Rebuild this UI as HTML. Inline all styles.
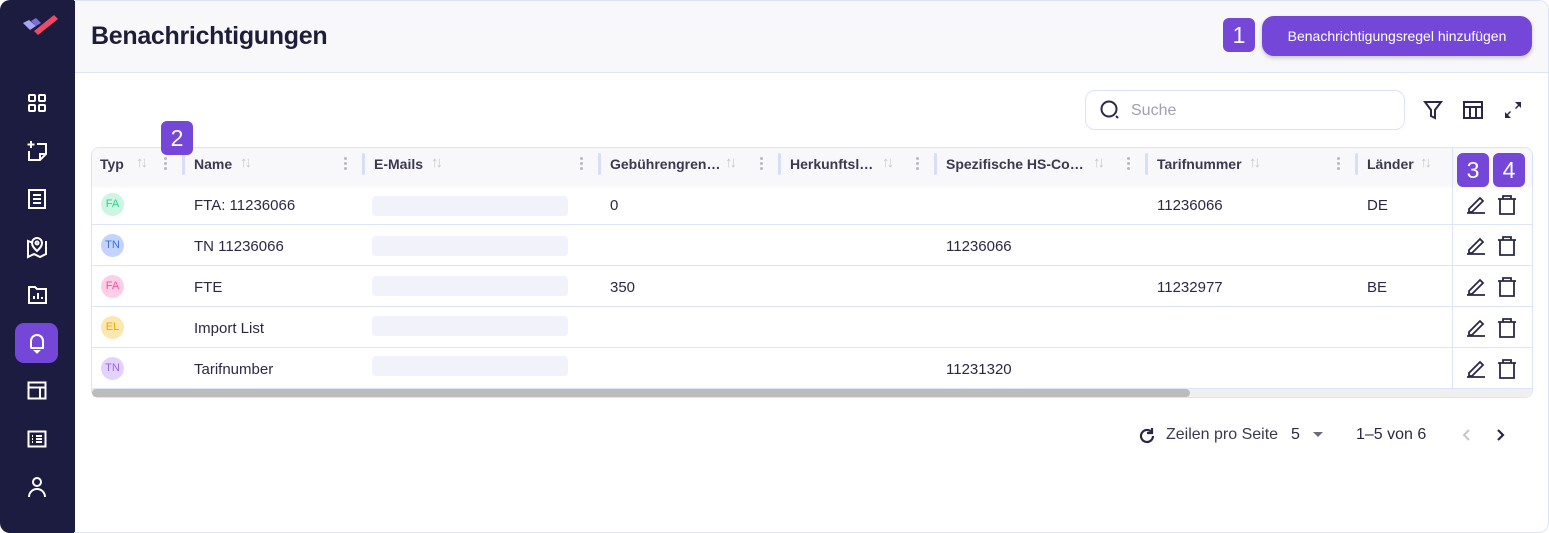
<!DOCTYPE html>
<html><head><meta charset="utf-8"><style>
*{box-sizing:border-box;margin:0;padding:0}
body{width:1549px;height:533px;background:#fff;font-family:"Liberation Sans",sans-serif;color:#2a2945;position:relative;overflow:hidden}
.a{position:absolute}
.side{left:0;top:0;width:75px;height:533px;background:#1c1b40;border-radius:10px 0 0 10px}
.main{left:74px;top:0;width:1475px;height:533px;border:1px solid #dde3f8;border-left:none;border-radius:0 10px 10px 0}
.hdr{left:75px;top:1px;width:1473px;height:72px;background:#f8f8fa;border-bottom:1px solid #dde3f8;border-radius:0 10px 0 0}
.badge{background:#7447d9;color:#fff;border-radius:6px;font-size:23px;text-align:center;line-height:34px;width:32px;height:34px}
.th{font-size:14px;font-weight:bold;color:#3a3950;top:156px}
.sort{top:154px;color:#c5c5d0;font-size:15px;letter-spacing:-3px}
.dots{top:157px;width:4px}
.dots i{display:block;width:3px;height:3px;border-radius:50%;background:#b8b8c4;margin-bottom:2px}
.div{top:153px;width:3px;height:22px;background:#d7defa;border-radius:2px}
.td{font-size:15px;color:#2a2945}
.av{width:23px;height:23px;border-radius:50%;font-size:11px;text-align:center;line-height:23px;left:101px}
.ph{left:372px;width:196px;height:20px;background:#f1f2fa;border-radius:4px}
.line{left:92px;width:1440px;height:1px;background:#dde3f8}
svg.i{position:absolute}
</style></head><body>
<div class="a side"></div>
<div class="a main"></div>
<div class="a hdr"></div>
<!-- logo -->
<svg class="i" style="left:22px;top:14px" width="36" height="22" viewBox="0 0 36 22"><path d="M1 9l6-3 7 6-6 4z" fill="#a9a6f0"/><path d="M9 7l5-3 5 5-5 3z" fill="#7a6fe0"/><path d="M12 17l20-16 4 4-20 16z" fill="#ef4a64"/></svg>
<!-- sidebar icons -->
<svg class="i" style="left:27px;top:93px" width="20" height="20" viewBox="0 0 20 20" fill="none" stroke="#fff" stroke-width="2"><rect x="2" y="2" width="6" height="6" rx="1"/><rect x="12" y="2" width="6" height="6" rx="1"/><rect x="2" y="12" width="6" height="6" rx="1"/><rect x="12" y="12" width="6" height="6" rx="1"/></svg>
<svg class="i" style="left:26px;top:140px" width="22" height="22" viewBox="0 0 22 22" fill="none" stroke="#fff" stroke-width="2"><path d="M5 1v7M1.5 4.5h7"/><path d="M11 4h9v10l-6 6H3v-9"/><path d="M14 20v-6h6"/></svg>
<svg class="i" style="left:27px;top:188px" width="20" height="22" viewBox="0 0 20 22" fill="none" stroke="#fff" stroke-width="2"><rect x="2" y="2" width="16" height="18"/><path d="M6 7h8M6 11h8M6 15h8"/></svg>
<svg class="i" style="left:26px;top:235px" width="22" height="24" viewBox="0 0 22 24" fill="none" stroke="#fff" stroke-width="2"><path d="M7 8L2 6v16l6-3 6 3 6-3V6"/><path d="M11 16c-3-3-5-5-5-8a5 5 0 0110 0c0 3-2 5-5 8z"/><circle cx="11" cy="8" r="1.5"/></svg>
<svg class="i" style="left:27px;top:285px" width="21" height="20" viewBox="0 0 21 20" fill="none" stroke="#fff" stroke-width="2"><path d="M2 2h6l2 2h9v14H2z"/><path d="M7 14v-3M11 14v-6M15 14v-2"/></svg>
<div class="a" style="left:15px;top:323px;width:43px;height:40px;background:#7447d9;border-radius:9px"></div>
<svg class="i" style="left:27px;top:332px" width="20" height="22" viewBox="0 0 20 22" fill="none" stroke="#fff" stroke-width="2"><path d="M4 16V9a6 6 0 0112 0v7H3.5"/><path d="M8.5 19h3l-1.5 1.5z" fill="#fff"/></svg>
<svg class="i" style="left:27px;top:381px" width="20" height="19" viewBox="0 0 20 19" fill="none" stroke="#fff" stroke-width="2"><rect x="1.5" y="1.5" width="17" height="16"/><path d="M1.5 6.5h17M13 6.5v11"/></svg>
<svg class="i" style="left:27px;top:430px" width="20" height="18" viewBox="0 0 20 18" fill="none" stroke="#fff" stroke-width="2"><rect x="1.5" y="1.5" width="17" height="15"/><path d="M5 6h1M9 6h6M5 9h1M9 9h6M5 12h1M9 12h6"/></svg>
<svg class="i" style="left:28px;top:476px" width="18" height="22" viewBox="0 0 18 22" fill="none" stroke="#fff" stroke-width="2"><circle cx="9" cy="6" r="4"/><path d="M1 21a8 8 0 0116 0"/></svg>

<div class="a" style="left:91px;top:22px;font-size:25px;font-weight:bold;color:#1f1e3a;letter-spacing:-0.3px">Benachrichtigungen</div>
<div class="a badge" style="left:1223px;top:18px">1</div>
<div class="a" style="left:1262px;top:16px;width:270px;height:40px;background:#7447d9;border-radius:12px;color:#fff;font-size:14px;text-align:center;line-height:40px;box-shadow:0 2px 4px rgba(0,0,0,.2)">Benachrichtigungsregel hinzufügen</div>

<!-- search -->
<div class="a" style="left:1085px;top:90px;width:320px;height:40px;border:1px solid #dde3f8;border-radius:10px"></div>
<svg class="i" style="left:1100px;top:100px" width="22" height="22" viewBox="0 0 22 22" fill="none" stroke="#2a2945" stroke-width="2"><circle cx="9" cy="9" r="7.5"/><path d="M16 16l2 2"/></svg>
<div class="a" style="left:1131px;top:102px;font-size:16px;color:#a0a0b0">Suche</div>
<svg class="i" style="left:1423px;top:100px" width="20" height="20" viewBox="0 0 20 20" fill="none" stroke="#2a2945" stroke-width="2"><path d="M2 2h16l-6 8v8l-4-2v-6z"/></svg>
<svg class="i" style="left:1462px;top:100px" width="22" height="20" viewBox="0 0 22 20" fill="none" stroke="#2a2945" stroke-width="2"><rect x="2" y="2" width="18" height="16"/><path d="M2 7h18M8 7v11M14 7v11"/></svg>
<svg class="i" style="left:1503px;top:100px" width="20" height="20" viewBox="0 0 20 20" fill="#2a2945"><path d="M12 2h6v6l-2-2-3 3-1-1 3-3z"/><path d="M8 18H2v-6l2 2 3-3 1 1-3 3z"/></svg>

<!-- table -->
<div class="a" style="left:91px;top:147px;width:1442px;height:251px;border:1px solid #dde3f8;border-radius:8px"></div>
<div class="a" style="left:92px;top:148px;width:1440px;height:37px;background:#f8f8fa;border-radius:8px 8px 0 0;box-shadow:0 2px 3px rgba(0,0,0,.04)"></div>
<div class="a th" style="left:100px">Typ</div><div class="a sort" style="left:136px">↑↓</div>
<div class="a dots" style="left:164px"><i></i><i></i><i></i></div><div class="a div" style="left:182px"></div>
<div class="a th" style="left:194px">Name</div><div class="a sort" style="left:240px">↑↓</div>
<div class="a dots" style="left:344px"><i></i><i></i><i></i></div><div class="a div" style="left:362px"></div>
<div class="a th" style="left:374px">E-Mails</div><div class="a sort" style="left:431px">↑↓</div>
<div class="a dots" style="left:580px"><i></i><i></i><i></i></div><div class="a div" style="left:598px"></div>
<div class="a th" style="left:610px">Gebührengren…</div><div class="a sort" style="left:725px">↑↓</div>
<div class="a dots" style="left:760px"><i></i><i></i><i></i></div><div class="a div" style="left:778px"></div>
<div class="a th" style="left:790px">Herkunftsl…</div><div class="a sort" style="left:882px">↑↓</div>
<div class="a dots" style="left:916px"><i></i><i></i><i></i></div><div class="a div" style="left:934px"></div>
<div class="a th" style="left:946px">Spezifische HS-Co…</div><div class="a sort" style="left:1093px">↑↓</div>
<div class="a dots" style="left:1127px"><i></i><i></i><i></i></div><div class="a div" style="left:1145px"></div>
<div class="a th" style="left:1157px">Tarifnummer</div><div class="a sort" style="left:1249px">↑↓</div>
<div class="a dots" style="left:1337px"><i></i><i></i><i></i></div><div class="a div" style="left:1355px"></div>
<div class="a th" style="left:1367px">Länder</div><div class="a sort" style="left:1420px">↑↓</div>
<div class="a" style="left:1452px;top:148px;width:1px;height:241px;background:#dde3f8"></div>

<div class="a line" style="top:224px"></div>
<div class="a line" style="top:265px"></div>
<div class="a line" style="top:306px"></div>
<div class="a line" style="top:347px"></div>
<div class="a line" style="top:388px"></div>

<div class="a av" style="top:193px;background:#cdf5e3;color:#3ccf8e">FA</div>
<div class="a td" style="left:194px;top:197px">FTA: 11236066</div><div class="a ph" style="top:196px"></div>
<div class="a td" style="left:610px;top:197px">0</div><div class="a td" style="left:1157px;top:197px">11236066</div><div class="a td" style="left:1367px;top:197px">DE</div>

<div class="a av" style="top:234px;background:#c3d3fb;color:#3d6ff0">TN</div>
<div class="a td" style="left:194px;top:238px">TN 11236066</div><div class="a ph" style="top:236px"></div>
<div class="a td" style="left:946px;top:238px">11236066</div>

<div class="a av" style="top:275px;background:#fdcfe6;color:#f0549e">FA</div>
<div class="a td" style="left:194px;top:279px">FTE</div><div class="a ph" style="top:276px"></div>
<div class="a td" style="left:610px;top:279px">350</div><div class="a td" style="left:1157px;top:279px">11232977</div><div class="a td" style="left:1367px;top:279px">BE</div>

<div class="a av" style="top:316px;background:#fde7b0;color:#f0a800">EL</div>
<div class="a td" style="left:194px;top:320px">Import List</div><div class="a ph" style="top:316px"></div>

<div class="a av" style="top:357px;background:#e2d3fd;color:#9a64ee">TN</div>
<div class="a td" style="left:194px;top:361px">Tarifnumber</div><div class="a ph" style="top:356px"></div>
<div class="a td" style="left:946px;top:361px">11231320</div>

<!-- action icons -->
<svg class="i" style="left:1464px;top:194px" width="58" height="190" viewBox="0 0 58 190" fill="none" stroke="#2a2945" stroke-width="1.8">
<g><path d="M3 19h18M5 15l11-11 3 3-11 11H5z"/><path d="M34 5h18M39 5V2h8v3M36 5v15h14V5"/></g>
<g transform="translate(0,41)"><path d="M3 19h18M5 15l11-11 3 3-11 11H5z"/><path d="M34 5h18M39 5V2h8v3M36 5v15h14V5"/></g>
<g transform="translate(0,82)"><path d="M3 19h18M5 15l11-11 3 3-11 11H5z"/><path d="M34 5h18M39 5V2h8v3M36 5v15h14V5"/></g>
<g transform="translate(0,123)"><path d="M3 19h18M5 15l11-11 3 3-11 11H5z"/><path d="M34 5h18M39 5V2h8v3M36 5v15h14V5"/></g>
<g transform="translate(0,164)"><path d="M3 19h18M5 15l11-11 3 3-11 11H5z"/><path d="M34 5h18M39 5V2h8v3M36 5v15h14V5"/></g>
</svg>

<!-- scrollbar -->
<div class="a" style="left:92px;top:389px;width:1440px;height:8px;background:#efefef;border-radius:0 0 8px 8px"></div>
<div class="a" style="left:92px;top:389px;width:1098px;height:8px;background:#bcbcbc;border-radius:4px"></div>

<div class="a badge" style="left:161px;top:121px">2</div>
<div class="a badge" style="left:1457px;top:153px">3</div>
<div class="a badge" style="left:1493px;top:153px">4</div>

<!-- pagination -->
<svg class="i" style="left:1137px;top:426px" width="20" height="20" viewBox="0 0 20 20" fill="none" stroke="#2a2945" stroke-width="2.2"><path d="M16 10a6 6 0 11-2-4.5"/><path d="M15 2v5h-5" fill="none"/></svg>
<div class="a" style="left:1166px;top:426px;font-size:16px;color:#3a3950">Zeilen pro Seite</div>
<div class="a" style="left:1291px;top:426px;font-size:16px;color:#2a2945">5</div>
<div class="a" style="left:1313px;top:432px;width:0;height:0;border-left:5px solid transparent;border-right:5px solid transparent;border-top:5px solid #6a6a7a"></div>
<div class="a" style="left:1356px;top:426px;font-size:16px;color:#2a2945">1–5 von 6</div>
<svg class="i" style="left:1460px;top:427px" width="14" height="16" viewBox="0 0 14 16" fill="none" stroke="#c5c5d0" stroke-width="2"><path d="M9 3L4 8l5 5"/></svg>
<svg class="i" style="left:1493px;top:427px" width="14" height="16" viewBox="0 0 14 16" fill="none" stroke="#2a2945" stroke-width="2.2"><path d="M5 3l5 5-5 5"/></svg>
</body></html>
